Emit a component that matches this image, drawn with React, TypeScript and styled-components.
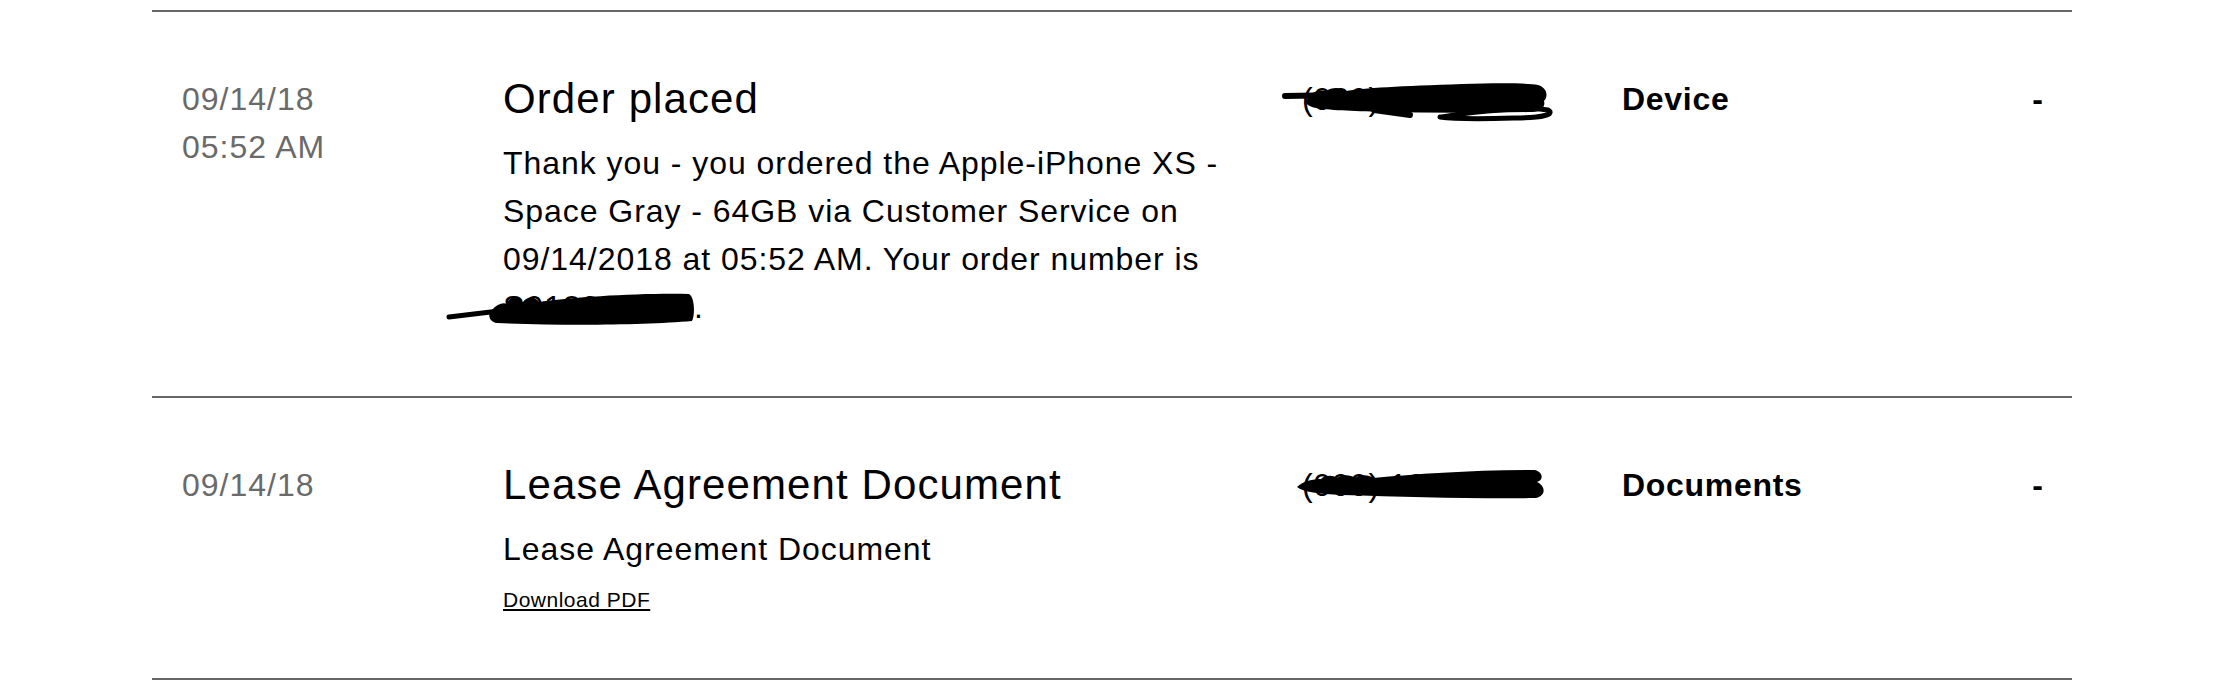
import React from "react";
import styled, { createGlobalStyle } from "styled-components";

const GlobalStyle = createGlobalStyle`
  html, body {
    margin: 0;
    padding: 0;
    background: #ffffff;
  }
  body {
    font-family: "Liberation Sans", Arial, Helvetica, sans-serif;
    color: #000000;
  }
`;

const Page = styled.main`
  padding-top: 10px;
`;

const List = styled.section`
  width: 1920px;
  margin: 0 auto;
  border-top: 2px solid #666666;
`;

const Row = styled.article`
  display: grid;
  grid-template-columns: 321px 799px 320px 1fr auto;
  align-items: start;
  padding: 63px 29px 65px 30px;
  border-bottom: 2px solid #666666;
`;

const DateCell = styled.div`
  display: flex;
  flex-direction: column;
  font-size: 32px;
  line-height: 48px;
  letter-spacing: 1px;
  color: #6a6a6a;
`;

const Detail = styled.div`
  display: flex;
  flex-direction: column;
  align-items: flex-start;
  padding-right: 40px;
`;

const Title = styled.h3`
  margin: 0 0 16px;
  font-size: 42px;
  line-height: 48px;
  font-weight: 400;
  letter-spacing: 1.1px;
  color: #000000;
`;

const Body = styled.p`
  margin: 0;
  font-size: 32px;
  line-height: 48px;
  letter-spacing: 0.95px;
  color: #000000;
`;

const Redacted = styled.span`
  position: relative;
  display: inline-block;
`;

const Scribble = styled.svg<{ $left: number; $top: number }>`
  position: absolute;
  left: ${(p) => p.$left}px;
  top: ${(p) => p.$top}px;
  pointer-events: none;
  overflow: visible;
`;

const DownloadLink = styled.a`
  margin-top: 14px;
  font-size: 21px;
  line-height: 26px;
  letter-spacing: 0.5px;
  color: #000000;
  text-decoration: underline;
  text-underline-offset: 2px;
  cursor: pointer;
`;

const PhoneCell = styled.div`
  position: relative;
  font-size: 32px;
  line-height: 48px;
  letter-spacing: 0.6px;
  color: #000000;
  white-space: nowrap;
`;

const Category = styled.div`
  font-size: 32px;
  line-height: 48px;
  font-weight: 700;
  letter-spacing: 0.7px;
`;

const Dash = styled.div`
  font-size: 32px;
  line-height: 48px;
  font-weight: 700;
  text-align: right;
`;

const ScribbleA = () => (
  <Scribble $left={-20} $top={8} width={272} height={38} viewBox="0 0 272 38">
    <g stroke="#000" strokeLinecap="round" strokeLinejoin="round" fill="none">
      <path d="M3 13 L62 12" strokeWidth={6} />
      <path d="M92 27 L128 32" strokeWidth={6} />
      <path
        d="M160 34 C200 27, 248 24, 266 27 C273 31, 262 35, 232 35 C200 36, 172 36, 158 34"
        strokeWidth={5}
      />
    </g>
    <path
      d="M26 15 C30 9, 36 6, 44 8 C50 4, 58 4, 64 8 C80 5, 120 3, 180 1 C215 0, 245 0, 256 2 C266 5, 266 14, 262 18 C264 24, 258 29, 250 29 C200 30, 150 30, 100 29 C70 28, 45 27, 34 25 C24 23, 22 19, 26 15 Z"
      fill="#000"
    />
  </Scribble>
);

const ScribbleB = () => (
  <Scribble $left={-5} $top={7} width={248} height={34} viewBox="0 0 248 34">
    <path
      d="M0 19 C6 13, 16 11, 24 11 C28 7, 36 7, 40 10 C46 6, 54 7, 58 10 C64 6, 72 7, 76 10 C120 6, 175 2, 238 2 C246 4, 247 12, 240 14 C249 18, 249 28, 239 30 C185 31, 110 29, 45 27 C22 26, 6 24, 0 19 Z"
      fill="#000"
    />
  </Scribble>
);

const ScribbleC = () => (
  <Scribble $left={-56} $top={9} width={250} height={34} viewBox="0 0 250 34">
    <path d="M2 25 L52 19" stroke="#000" strokeWidth={5} strokeLinecap="round" fill="none" />
    <path
      d="M45 18 C50 12, 56 10, 60 12 C62 4, 72 3, 76 10 C80 4, 88 4, 92 10 C130 5, 190 1, 242 2 C248 5, 248 24, 245 29 C200 33, 120 34, 50 31 C42 30, 40 22, 45 18 Z"
      fill="#000"
    />
  </Scribble>
);

type Entry = {
  date: string;
  time?: string;
  title: string;
  body: React.ReactNode;
  link?: string;
  phone: React.ReactNode;
  category: string;
};

const entries: Entry[] = [
  {
    date: "09/14/18",
    time: "05:52 AM",
    title: "Order placed",
    body: (
      <Body>
        Thank you - you ordered the Apple-iPhone XS - Space Gray - 64GB via Customer Service on
        09/14/2018 at 05:52 AM. Your order number is{" "}
        <Redacted>
          S012345678
          <ScribbleC />
        </Redacted>
        .
      </Body>
    ),
    phone: (
      <>
        (000) 123-4567
        <ScribbleA />
      </>
    ),
    category: "Device",
  },
  {
    date: "09/14/18",
    title: "Lease Agreement Document",
    body: <Body>Lease Agreement Document</Body>,
    link: "Download PDF",
    phone: (
      <>
        (000) 123-4567
        <ScribbleB />
      </>
    ),
    category: "Documents",
  },
];

export default function App() {
  return (
    <Page>
      <GlobalStyle />
      <List>
        {entries.map((e, i) => (
          <Row key={i}>
            <DateCell>
              <span>{e.date}</span>
              {e.time && <span>{e.time}</span>}
            </DateCell>
            <Detail>
              <Title>{e.title}</Title>
              {e.body}
              {e.link && <DownloadLink>{e.link}</DownloadLink>}
            </Detail>
            <PhoneCell>{e.phone}</PhoneCell>
            <Category>{e.category}</Category>
            <Dash>-</Dash>
          </Row>
        ))}
      </List>
    </Page>
  );
}
